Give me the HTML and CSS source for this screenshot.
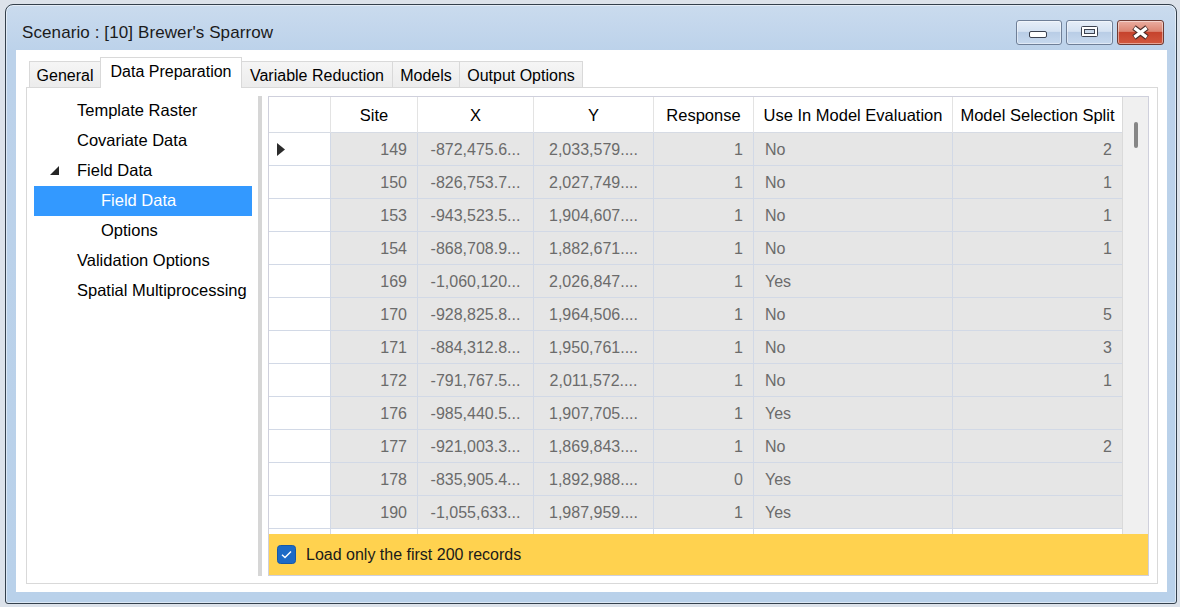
FILE: index.html
```html
<!DOCTYPE html>
<html>
<head>
<meta charset="utf-8">
<title>Scenario</title>
<link rel="stylesheet" href="styles.css">
</head>
<body>
<div class="window">
  <div class="titlebar">
    <span class="title">Scenario : [10] Brewer's Sparrow</span>
    <div class="caption">
      <div class="cbtn min"><svg width="44" height="23" viewBox="0 0 44 23"><rect x="12.5" y="10.5" width="17" height="6" rx="1.5" fill="#fff" stroke="#3c4250"/></svg></div>
      <div class="cbtn max"><svg width="45" height="23" viewBox="0 0 45 23"><rect x="14.5" y="5.5" width="16" height="10" rx="1" fill="#fff" stroke="#3c4250"/><rect x="17.5" y="8.5" width="10" height="4" fill="#c9d8ea" stroke="#3c4250"/></svg></div>
      <div class="cbtn close"><svg width="45" height="23" viewBox="0 0 45 23"><path d="M16 6.5 L29 16.5 M29 6.5 L16 16.5" stroke="#4a2a26" stroke-width="5.5" fill="none"/><path d="M16.4 6.9 L28.6 16.1 M28.6 6.9 L16.4 16.1" stroke="#fff" stroke-width="3.2" fill="none"/></svg></div>
    </div>
  </div>
  <div class="client">
    <div class="tabs">
      <div class="tab w-gen">General</div>
      <div class="tab active w-dp">Data Preparation</div>
      <div class="tab w-vr">Variable Reduction</div>
      <div class="tab w-mod">Models</div>
      <div class="tab w-out">Output Options</div>
    </div>
    <div class="panel">
      <div class="tree">
        <div class="node">Template Raster</div>
        <div class="node">Covariate Data</div>
        <div class="node exp"><svg class="twisty" width="10" height="10" viewBox="0 0 10 10"><polygon points="9,0 9,9 0,9" fill="#262626"/></svg>Field Data</div>
        <div class="node l1 sel">Field Data</div>
        <div class="node l1">Options</div>
        <div class="node">Validation Options</div>
        <div class="node">Spatial Multiprocessing</div>
      </div>
      <div class="splitter"></div>
      <div class="gridwrap">
        <div class="grid">
          <div class="cols">
            <div class="row hdr">
              <div class="c"></div><div class="c">Site</div><div class="c">X</div><div class="c">Y</div><div class="c">Response</div><div class="c">Use In Model Evaluation</div><div class="c">Model Selection Split</div>
            </div>
            <div class="row body">
              <div class="c rh"><svg width="8" height="13" viewBox="0 0 8 13"><polygon points="0,0 8,6.5 0,13" fill="#2b2b2b"/></svg></div><div class="c r">149</div><div class="c ctr">-872,475.6...</div><div class="c ctr">2,033,579....</div><div class="c r">1</div><div class="c">No</div><div class="c r">2</div>
            </div>
            <div class="row body">
              <div class="c rh"></div><div class="c r">150</div><div class="c ctr">-826,753.7...</div><div class="c ctr">2,027,749....</div><div class="c r">1</div><div class="c">No</div><div class="c r">1</div>
            </div>
            <div class="row body">
              <div class="c rh"></div><div class="c r">153</div><div class="c ctr">-943,523.5...</div><div class="c ctr">1,904,607....</div><div class="c r">1</div><div class="c">No</div><div class="c r">1</div>
            </div>
            <div class="row body">
              <div class="c rh"></div><div class="c r">154</div><div class="c ctr">-868,708.9...</div><div class="c ctr">1,882,671....</div><div class="c r">1</div><div class="c">No</div><div class="c r">1</div>
            </div>
            <div class="row body">
              <div class="c rh"></div><div class="c r">169</div><div class="c ctr">-1,060,120...</div><div class="c ctr">2,026,847....</div><div class="c r">1</div><div class="c">Yes</div><div class="c r"></div>
            </div>
            <div class="row body">
              <div class="c rh"></div><div class="c r">170</div><div class="c ctr">-928,825.8...</div><div class="c ctr">1,964,506....</div><div class="c r">1</div><div class="c">No</div><div class="c r">5</div>
            </div>
            <div class="row body">
              <div class="c rh"></div><div class="c r">171</div><div class="c ctr">-884,312.8...</div><div class="c ctr">1,950,761....</div><div class="c r">1</div><div class="c">No</div><div class="c r">3</div>
            </div>
            <div class="row body">
              <div class="c rh"></div><div class="c r">172</div><div class="c ctr">-791,767.5...</div><div class="c ctr">2,011,572....</div><div class="c r">1</div><div class="c">No</div><div class="c r">1</div>
            </div>
            <div class="row body">
              <div class="c rh"></div><div class="c r">176</div><div class="c ctr">-985,440.5...</div><div class="c ctr">1,907,705....</div><div class="c r">1</div><div class="c">Yes</div><div class="c r"></div>
            </div>
            <div class="row body">
              <div class="c rh"></div><div class="c r">177</div><div class="c ctr">-921,003.3...</div><div class="c ctr">1,869,843....</div><div class="c r">1</div><div class="c">No</div><div class="c r">2</div>
            </div>
            <div class="row body">
              <div class="c rh"></div><div class="c r">178</div><div class="c ctr">-835,905.4...</div><div class="c ctr">1,892,988....</div><div class="c r">0</div><div class="c">Yes</div><div class="c r"></div>
            </div>
            <div class="row body">
              <div class="c rh"></div><div class="c r">190</div><div class="c ctr">-1,055,633...</div><div class="c ctr">1,987,959....</div><div class="c r">1</div><div class="c">Yes</div><div class="c r"></div>
            </div>
            <div class="row body partial">
              <div class="c rh"></div><div class="c"></div><div class="c"></div><div class="c"></div><div class="c"></div><div class="c"></div><div class="c"></div>
            </div>
          </div>
          <div class="vscroll"><div class="thumb"></div></div>
        </div>
        <div class="notice">
          <svg class="chk" width="19" height="19" viewBox="0 0 19 19"><rect x="0.5" y="0.5" width="18" height="18" rx="3" fill="#1d6ac6" stroke="#1558a8"/><path d="M5 9.8 L8 12.6 L14 6.4" stroke="#fff" stroke-width="1.4" fill="none"/></svg>
          <span>Load only the first 200 records</span>
        </div>
      </div>
    </div>
  </div>
</div>
</body>
</html>
```
FILE: styles.css
```css
* { box-sizing: border-box; }
html, body { margin: 0; height: 100%; }
body {
  background: #dce2ea;
  padding: 4px 0 0 5px;
  overflow: hidden;
  font-family: "Liberation Sans", Arial, sans-serif;
}
.window {
  width: 1172px;
  height: 600px;
  border: 1px solid #34404c;
  border-radius: 8px 8px 3px 3px;
  background: linear-gradient(to bottom, #cadbee 0, #bcd2ea 46px, #b9d1ea 100%);
  box-shadow: inset 0 0 0 1px rgba(255,255,255,0.5);
  display: flex;
  flex-direction: column;
}
.titlebar {
  height: 45px;
  flex: none;
  display: flex;
  justify-content: space-between;
  align-items: flex-start;
  padding: 0 12px 0 16px;
}
.title {
  font-size: 17px;
  line-height: 20px;
  padding-top: 18px;
  color: #1b1b1b;
  letter-spacing: 0.1px;
}
.caption {
  display: flex;
  gap: 4px;
  margin-top: 15px;
}
.cbtn {
  height: 25px;
  width: 46px;
  border: 1px solid #6f7f97;
  border-radius: 3px;
  background: linear-gradient(to bottom, #e6eef8 0%, #d5e2f2 45%, #b9cde6 50%, #c7d9ee 100%);
  box-shadow: inset 0 0 0 1px rgba(255,255,255,0.45);
  display: flex;
}
.cbtn.max { width: 47px; }
.cbtn.close {
  width: 47px;
  margin-left: 0;
  border-color: #6e3b33;
  background: linear-gradient(to bottom, #eaaea1 0%, #dc8572 45%, #c6432d 50%, #d2573e 100%);
}
.client {
  flex: 1;
  margin: 0 9px 11px 10px;
  background: #fff;
  padding: 7px 9px 8px 10px;
  display: flex;
  flex-direction: column;
}
.tabs {
  height: 30px;
  flex: none;
  display: flex;
  align-items: flex-end;
  padding-left: 3px;
}
.tab {
  height: 26px;
  border: 1px solid #d9d9d9;
  border-bottom: none;
  background: linear-gradient(to bottom, #f5f5f5, #ececec);
  margin-left: -1px;
  font-size: 16px;
  color: #000;
  display: flex;
  align-items: center;
  justify-content: center;
  padding-top: 2px;
  white-space: nowrap;
}
.tab:first-child { margin-left: 0; }
.tab.active {
  height: 31px;
  background: #fff;
  margin-bottom: -1px;
  position: relative;
  z-index: 1;
  padding-top: 0;
  padding-bottom: 2px;
}
.w-gen { width: 72px; }
.w-dp { width: 142px; }
.w-vr { width: 152px; }
.w-mod { width: 68px; }
.w-out { width: 124px; }
.panel {
  flex: 1;
  border: 1px solid #d9d9d9;
  padding: 8px 8px 7px 7px;
  display: flex;
  min-height: 0;
}
.tree {
  width: 218px;
  flex: none;
  font-size: 16.5px;
  color: #000;
}
.node {
  height: 30px;
  display: flex;
  align-items: center;
  padding-left: 43px;
  padding-bottom: 1px;
  white-space: nowrap;
}
.node.exp { padding-left: 16px; }
.twisty { margin-right: 17px; flex: none; }
.node.l1 { padding-left: 67px; }
.node.sel { background: #3399ff; color: #fff; }
.splitter {
  width: 4px;
  flex: none;
  margin: 0 6px;
  background: #d6d6d6;
}
.gridwrap {
  width: 881px;
  flex: none;
  border: 1px solid #cfd0dc;
  display: flex;
  flex-direction: column;
}
.grid {
  height: 437px;
  flex: none;
  display: flex;
  overflow: hidden;
}
.cols {
  width: 853px;
  display: flex;
  flex-direction: column;
  overflow: hidden;
}
.row {
  display: grid;
  grid-template-columns: 62px 87px 116px 120px 100px 199px 169px;
  flex: none;
}
.hdr .c {
  height: 36px;
  background: #fff;
  border-right: 1px solid #e3e3e3;
  border-bottom: 1px solid #d6dbe4;
  display: flex;
  align-items: center;
  justify-content: center;
  padding-top: 2px;
  font-size: 16.5px;
  color: #000;
  white-space: nowrap;
  overflow: hidden;
}
.body .c {
  height: 33px;
  background: #e6e6e6;
  border-right: 1px solid #d2d9e6;
  border-bottom: 1px solid #d2d9e6;
  color: #6b6b6b;
  font-size: 16px;
  display: flex;
  align-items: center;
  padding: 1px 11px 0;
  white-space: nowrap;
  overflow: hidden;
}
.row .c:last-child { border-right: none; }
.body .c.rh { background: #fff; padding: 1px 0 0 8px; }
.body .c.r { justify-content: flex-end; padding-right: 10px; }
.body .c.ctr { justify-content: center; padding: 1px 0 0; }
.partial .c { height: 5px; background: #fff; border-bottom: none; }
.vscroll {
  width: 26px;
  flex: none;
  background: #f0f0f0;
  border-left: 1px solid #dadada;
  padding-top: 25px;
  display: flex;
  justify-content: center;
  align-items: flex-start;
}
.thumb {
  width: 4px;
  height: 26px;
  background: #868686;
  border-radius: 2px;
}
.notice {
  height: 41px;
  flex: none;
  background: #ffd24f;
  display: flex;
  align-items: center;
  padding-left: 8px;
  gap: 10px;
  font-size: 16px;
  color: #1a1a1a;
}
.chk { flex: none; }
```
